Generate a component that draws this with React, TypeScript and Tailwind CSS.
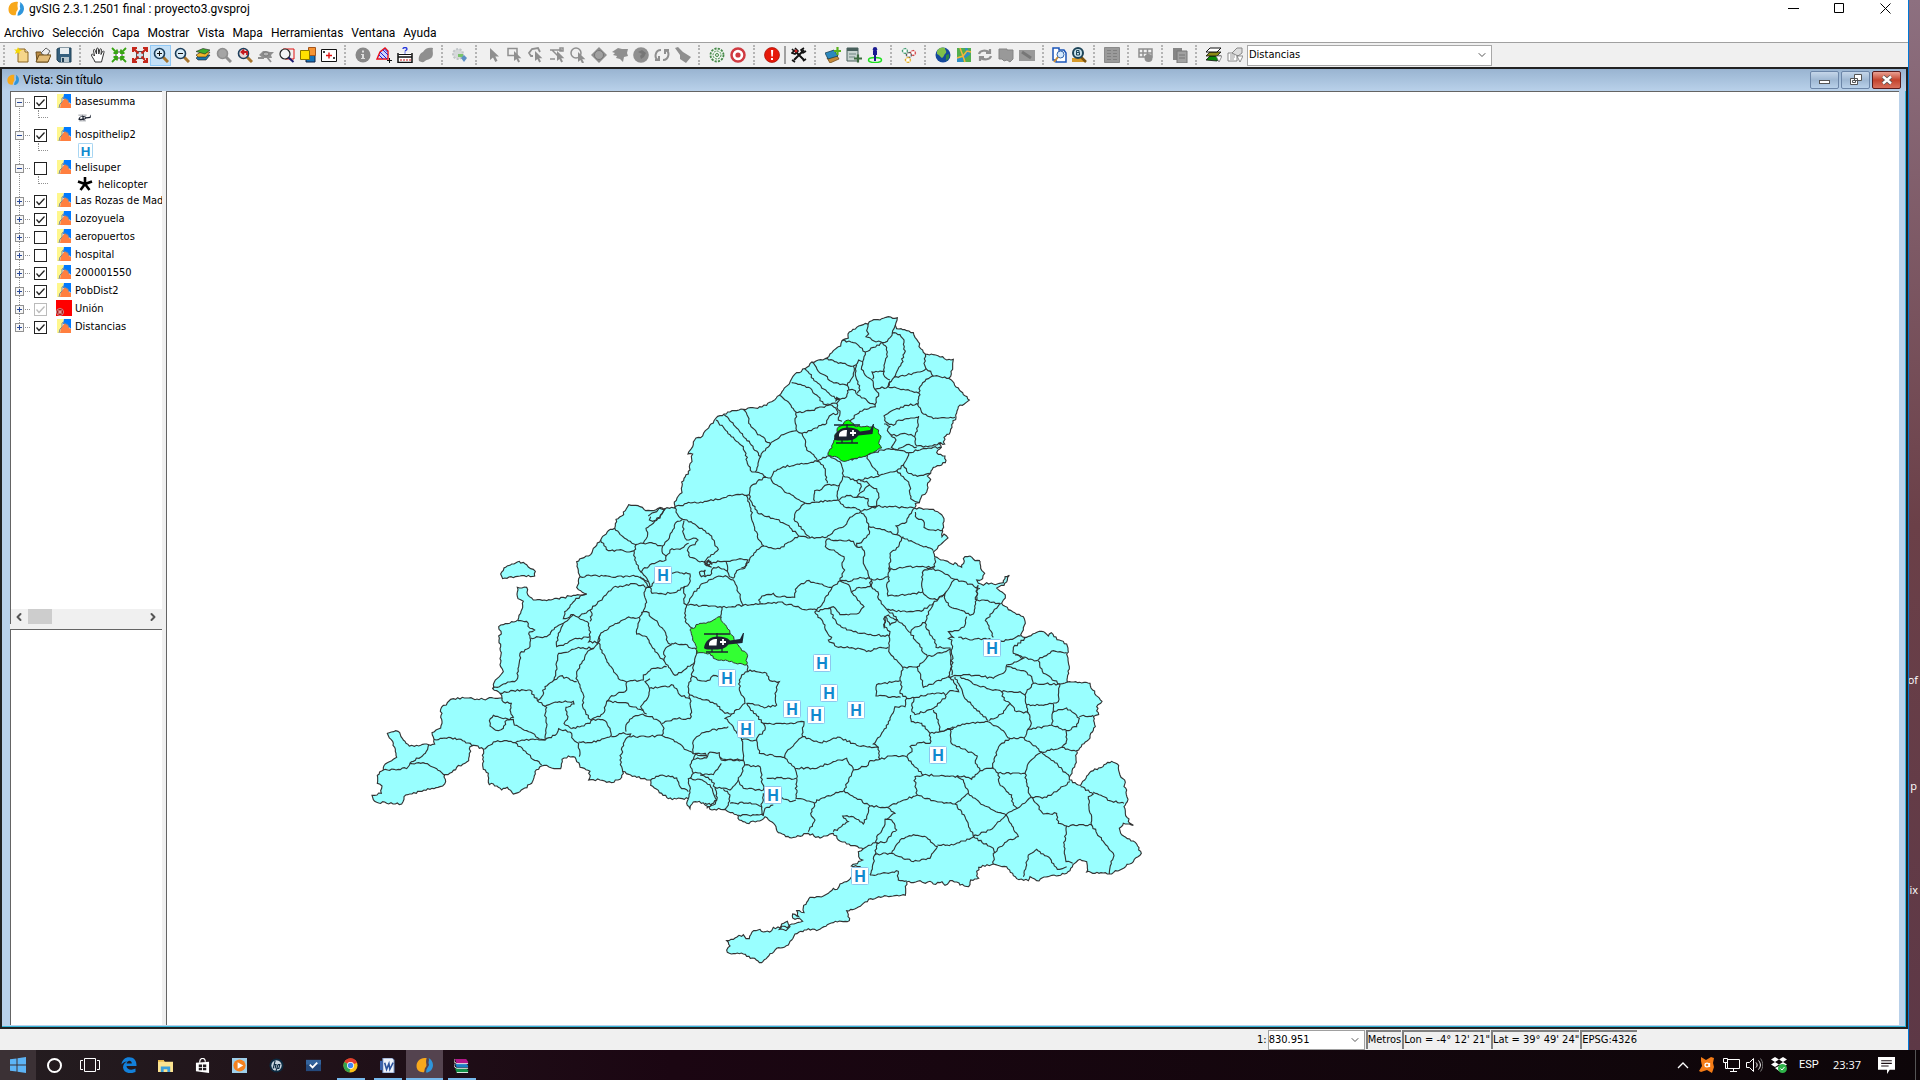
import type { ReactNode } from 'react';
import { ChevronDown, ChevronLeft, ChevronRight } from 'lucide-react';

const GRAY = '#8f8f8f';

// ---- Toolbar icons (16x16) ----

const magnifier = (lens: string, handle: string, extra?: ReactNode) => (
  <>
    <path d="M10 10l5 5" stroke={handle} strokeWidth="3" />
    <circle cx="6.5" cy="6.5" r="5" fill={lens} stroke={handle === GRAY ? GRAY : '#1d3f5c'} strokeWidth="1.6" />
    {extra}
  </>
);

const cursor = (x: number, y: number) => (
  <path d={`M${x} ${y}v10l2.4-2 1.8 3.6 1.8-1-1.8-3.4h3.2z`} fill={GRAY} />
);

const layerStack = (a: string, b: string, c: string) => (
  <>
    <path d="M1 11l4-3h10l-4 5H3z" fill={c} stroke="#222" strokeWidth=".6" />
    <path d="M1 8l5-3h9l-4 5H3z" fill={b} stroke="#222" strokeWidth=".6" />
    <path d="M1 4.5l7-3 7 1.5-5 4z" fill={a} stroke="#222" strokeWidth=".6" />
  </>
);

const icons: Record<string, ReactNode> = {
  Nuevo: (
    <>
      <path d="M4 2h7l3 3v10H4z" fill="#f6d68a" stroke="#8a6420" />
      <path d="M11 2v3h3" fill="#fff" stroke="#8a6420" />
      <path d="M4 0l1 2.6L8 3 5.500 4.500 6 7 4 5.500 1 7l1-3L0 2.500 3 2.600z" fill="#f5d800" />
    </>
  ),
  Abrir: (
    <>
      <path d="M1 5h5l1 1h6v9H2z" fill="#b98a43" stroke="#6b4c1b" />
      <path d="M6 6l5-5 4 3-4 6z" fill="#eee" stroke="#666" />
      <path d="M4 8h12l-3 7H1z" fill="#e2bc77" stroke="#6b4c1b" />
    </>
  ),
  Guardar: (
    <>
      <path d="M1 2l2-1h12v14H3l-2-2z" fill="#35607e" stroke="#234257" />
      <path d="M4 1h9v6H4z" fill="#e9eef1" />
      <path d="M5 10h8v5H5z" fill="#b8c7cf" />
      <path d="M6 11h2v4H6z" fill="#234257" />
    </>
  ),
  Desplazamiento: (
    <path
      d="M5 15C4 12 1.500 9.500 1.500 8s1.500-1 3 1L3.500 3.500c0-1.400 1.400-1.400 1.800 0L6.500 7 6.600 2c.1-1.300 1.600-1.300 1.800 0L8.800 7l1-4.500c.3-1.200 1.700-1 1.600.4L11 7.500l1.500-3c.6-1 1.900-.4 1.500.8L12.500 11l-1 4z"
      fill="#fff"
      stroke="#333"
    />
  ),
  'Zoom acercando': (
    <>
      <path d="M5 5h6v6H5z" fill="#fff" stroke="#444" />
      <path d="M1 1l5 5M6 2.500V6H2.500M15 1l-5 5M10 2.500V6h3.500M1 15l5-5M2.500 10H6v3.500M15 15l-5-5M13.500 10H10v3.500" fill="none" stroke="#37a412" strokeWidth="1.800" />
    </>
  ),
  'Zoom alejando': (
    <>
      <path d="M4.500 4.500h7v7h-7z" fill="#cfe3ee" stroke="#555" />
      <path d="M2 2l4.500 4.500M1 5V1h4M14 2L9.500 6.500M11 1h4v4M2 14l4.500-4.500M1 11v4h4M14 14L9.500 9.500M15 11v4h-4" fill="none" stroke="#c5281c" strokeWidth="2.200" />
    </>
  ),
  'Zoom más': magnifier('#d9ecf8', '#a8752c', <path d="M4 6.500h5M6.500 4v5" stroke="#111" />),
  'Zoom menos': magnifier('#d9ecf8', '#a8752c', <path d="M4 6.500h5" stroke="#111" />),
  'Zoom todo': layerStack('#3fae2b', '#f0b528', '#1b74a8'),
  'Zoom a la selección': magnifier('#a5a5a5', GRAY),
  'Zoom previo': magnifier('#e9d6d6', '#a8752c', <path d="M10 8V5H5m2-2.200L4.500 5 7 7.300" fill="none" stroke="#c4181e" strokeWidth="1.800" />),
  'Encuadres anteriores': (
    <>
      <path d="M1 8l4-4h3l4 1h4l-3 3 1 3H5z" fill={GRAY} />
      <path d="M0 11h6M9 10l4 5" stroke={GRAY} strokeWidth="1.800" />
      <ellipse cx="8" cy="7" rx="3" ry="2" fill="#b5b5b5" stroke="#777" />
    </>
  ),
  'Zoom a capa': (
    <>
      <path d="M4 2h11v10H6" fill="none" stroke="#e01010" />
      <circle cx="6" cy="7" r="5" fill="#f4f4f4" stroke="#222" strokeWidth="1.200" />
      <path d="M9.500 10.500l5 4.500" stroke="#1b1b70" strokeWidth="2" />
    </>
  ),
  'Gestión de encuadres': (
    <>
      <path d="M9 8h6v7H6v-5z" fill="#1673b8" stroke="#124" />
      <path d="M8.500.5h7v8h-7z" fill="#f79433" stroke="#a5541a" />
      <path d="M.5 3.500h9v9h-9z" fill="#ffe100" stroke="#8a7600" />
    </>
  ),
  'Centrar vista': (
    <>
      <path d="M.5 2.500h15v12H.5z" fill="#fff" stroke="#111" />
      <path d="M5 8.500h6M8 5.500v6" stroke="#e01010" strokeWidth="1.400" />
      <path d="M2 4l2 2m0-2L2 6M12 10l2 2m0-2l-2 2" stroke="#111" strokeWidth=".8" />
    </>
  ),
  Información: (
    <>
      <circle cx="8" cy="8" r="7.500" fill="#888" />
      <path d="M6 7h3v4h1v1H6v-1h1V8H6zM7 3.500h2v2H7z" fill="#ddd" />
    </>
  ),
  'Medir área': (
    <>
      <path d="M1 12L4 5l5-4 3 3v8z" fill="#cfd4ff" stroke="#e8101a" strokeWidth="1.400" />
      <path d="M4 5l7 7M7 3l5 5M3 8l4 4M8.500 2l3 3" stroke="#2323d0" />
      <path d="M11 13.500h5M13.500 11v5" stroke="#111" />
    </>
  ),
  'Medir distancia': (
    <>
      <path d="M1 6v9.500h14V6M1 10h14" fill="#fff" stroke="#111" strokeWidth="1.500" />
      <path d="M1.500 7.500h13" stroke="#111" />
      <path d="M4 12v2M7 12v2M10 12v2M13 12v2" stroke="#c11" />
      <path d="M6 2c0-2 4-2 4 0 0 1.200-2 1.200-2 2.500M8 5.500v1" fill="none" stroke="#2233dd" strokeWidth="1.300" />
    </>
  ),
  Hiperenlace: <path d="M1 14c-1-4 1-8 4-9 2-4 6-5 10-4-1 3 1 6-1 9-2 3-5 2-7 4-2 2-4 1-6 0z" fill={GRAY} />,
  Geoproceso: (
    <>
      <circle cx="6" cy="7" r="5" fill="#d5d8da" stroke="#c0c4c7" strokeWidth="2" strokeDasharray="2 1.500" />
      <path d="M6 7h5v3H6z" fill="#79c36a" />
      <path d="M12 8l3 3-3 4-3-4z" fill="#5d8fc4" />
    </>
  ),
  Seleccionar: <path d="M4 1v12l3-2.500L9.300 15l2.200-1.200L9.300 9.500H13z" fill={GRAY} />,
  'Selección por rectángulo': (<><path d="M1 1.500h9v7H1z" fill="none" stroke={GRAY} strokeWidth="1.500" />{cursor(7, 4)}</>),
  'Selección por polígono': (<><path d="M5 9H3L1 6l3-4 6-1 2 4" fill="none" stroke={GRAY} strokeWidth="1.800" />{cursor(7, 4)}</>),
  'Selección por polilínea': (<><path d="M1 3h12M3 3l8 8M1 12h5M11 1h3v3h-3z" fill="none" stroke={GRAY} strokeWidth="1.500" />{cursor(8, 4)}</>),
  'Selección por círculo': (<><circle cx="6" cy="6" r="5" fill="none" stroke={GRAY} strokeWidth="1.500" />{cursor(8, 5)}</>),
  'Selección por buffer': (<><path d="M8 0l8 8-8 8-8-8z" fill={GRAY} /><circle cx="8" cy="8" r="4.500" fill="#a0a0a0" stroke="#777" /></>),
  'Selección por capa': <path d="M0 5l6-4 4 1 6 0-1 4 1 3-4 1-1 5-3-3-4-1 1-2-4-1 2-2z" fill={GRAY} />,
  'Seleccionar todo': (<><circle cx="8" cy="8" r="7.800" fill={GRAY} /><path d="M5 5l4-2 4 3-2 4-3 2-1-3 2-2z" fill="#777" /></>),
  'Invertir selección': (
    <path d="M7 3c-6 0-7 8-3 10M1 13h4V9M9 13c6 0 7-8 3-10M15 3h-4v4" fill="none" stroke={GRAY} strokeWidth="2" />
  ),
  'Limpiar selección': <path d="M0 1l3-1 5 5 8 5-5 6-6-4V8z" fill={GRAY} />,
  Geoprocesos: (
    <>
      <circle cx="8" cy="8" r="6.500" fill="#eef5ee" stroke="#458a48" strokeWidth="1.800" strokeDasharray="2.200 1.200" />
      <circle cx="8" cy="8" r="4" fill="none" stroke="#458a48" strokeDasharray="2 1" />
      <circle cx="8" cy="8" r="1.500" fill="none" stroke="#458a48" />
    </>
  ),
  Modelador: (<><circle cx="8" cy="8" r="6.500" fill="#fff" stroke="#d03a41" strokeWidth="2.500" /><circle cx="8" cy="8" r="2.600" fill="#d03a41" /></>),
  Errores: (<><circle cx="8" cy="8" r="7.500" fill="#e61a0a" stroke="#a30d04" strokeWidth=".7" /><path d="M7 3h2.200l-.4 6.500H7.400zM7 11h2v2H7z" fill="#fff" /></>),
  Preferencias: (
    <>
      <path d="M3 3l10 10M13 3L3 13" stroke="#111" strokeWidth="2" />
      <path d="M1 2l2 2-2 2 3 1 3-3-3-3M15 4l-3 2-2-3 3-2M1 13l3 2M12 14l3-2" fill="none" stroke="#111" strokeWidth="1.600" />
      <circle cx="5" cy="4" r="1.500" fill="#c22" />
    </>
  ),
  'Añadir capa': (
    <>
      <path d="M2 11l9-4 3 5-9 4z" fill="#c58a3c" stroke="#6b4310" strokeWidth=".7" />
      <path d="M0 6l9-3 4 6-10 3z" fill="#2c88bd" stroke="#134" strokeWidth=".7" />
      <path d="M9 4h7M12.500 0v8" stroke="#59b31c" strokeWidth="2.200" />
    </>
  ),
  'Nueva capa': (
    <>
      <path d="M1 1h11v13H1z" fill="#c8d3cf" stroke="#48605c" />
      <path d="M1 1h11v3H1z" fill="#48605c" />
      <path d="M3 7h7M3 10h6" stroke="#6f8581" />
      <path d="M8 11.500h8M12 7.500v8" stroke="#3c6b3f" strokeWidth="2.200" />
    </>
  ),
  Localizar: (
    <>
      <ellipse cx="8" cy="13" rx="6.500" ry="2.500" fill="none" stroke="#1ee01e" strokeWidth="1.500" />
      <path d="M6 4h4v4H9v6H7V8H6z" fill="#1a1a90" />
      <circle cx="8" cy="2.200" r="2.200" fill="#1a1a90" />
    </>
  ),
  Topología: (
    <g fill="#fff" strokeWidth="1.2">
      <path d="M1 4l3-3 3 3-3 3z" stroke="#3c9b6e" strokeDasharray="1.500 .7" />
      <path d="M9 6l3-3 3 3-3 3z" stroke="#d23b3b" strokeDasharray="1.500 .7" />
      <path d="M5 8l3-3 3 3-3 3z" stroke="#555" strokeDasharray="1.500 .7" />
      <path d="M4 13l3-3 3 3-3 3z" stroke="#e5ad1f" strokeDasharray="1.500 .7" />
    </g>
  ),
  Globo: (<><circle cx="8" cy="8" r="7.500" fill="#14489c" /><path d="M2 4c2-4 6-4 8-3 0 2 2 3 1 5-2 1-2 4-4 5-2-1-2-3-5-4z" fill="#7fbf4a" /><path d="M11 8l3-1v4l-3 3z" fill="#2c8744" /></>),
  'Mapa web': (<><path d="M1 1h14v14H1z" fill="#2d8fc4" /><path d="M1 1h8l1 5-4 5-5-1zM11 1h4v7zM8 12l7-5v8H7z" fill="#52ae4d" /><path d="M1 11l6-2 4-5 4 1M4 1l3 8 2 6" fill="none" stroke="#f3b53d" strokeWidth="1.500" /></>),
  Actualizar: <path d="M2 7c1-4 7-4 10-2M13 2v4H9M14 9c-1 4-7 4-10 2M3 14v-4h4" fill="none" stroke={GRAY} strokeWidth="2.200" />,
  'Copiar escena': <path d="M1 2h8v1h6v9l-3 3-3-2-3 1-2-2H1z" fill="#999" stroke="#858585" />,
  Imagen: (<><path d="M0 3h16v11H0z" fill="#999" /><path d="M3 5l9 6" stroke="#777" strokeWidth="3" /></>),
  'Buscar documento': (
    <>
      <path d="M1 1h6v2h5l2 3v9H4v-2H1z" fill="#fff" stroke="#1a54b8" strokeWidth="1.500" />
      <circle cx="8.500" cy="7.500" r="3.500" fill="#d5eaff" stroke="#2f62a8" />
      <path d="M6 10l-4 5" stroke="#c68a35" strokeWidth="2" />
    </>
  ),
  Buscador: (
    <>
      <path d="M1 11h12v4H1z" fill="#d79a2a" />
      <path d="M10 10l5 5" stroke="#7d5410" strokeWidth="2.500" />
      <circle cx="7" cy="6" r="5" fill="#c7e0ea" stroke="#1d4458" strokeWidth="2" />
      <path d="M5.500 3.500h2.500v2H5.500zM5.500 5.500h3v2.500h-3z" fill="none" stroke="#1d4458" />
    </>
  ),
  Tabla: (<><path d="M.5.5h15v15H.5z" fill="#9a9a9a" stroke="#8a8a8a" /><path d="M3 3.500h4M3 6.500h4M3 9.500h4M3 12.500h4M9 3.500h4M9 6.500h4M9 9.500h4M9 12.500h4" stroke="#808080" /></>),
  'Unir tablas': (<><path d="M1 2h13v8H1zM1 6h13M5 2v8M9.500 2v8" fill="none" stroke={GRAY} strokeWidth="1.500" /><circle cx="10.500" cy="11" r="4" fill={GRAY} /></>),
  'Copiar tabla': (<><path d="M1 1h9v12H1z" fill="#858585" /><path d="M5 4h10v12H5z" fill="#a1a1a1" stroke="#777" /><path d="M7 8h6M7 11h6" stroke="#777" /></>),
  'Capa activa': (
    <>
      <path d="M0 13l4-4h11l-4 5z" fill="#0a8a0a" stroke="#111" strokeWidth=".8" />
      <path d="M0 9l4-4h11l-4 4z" fill="#8a8a14" stroke="#111" strokeWidth=".8" />
      <path d="M0 5l4-4h11l-4 4z" fill="#fff" stroke="#111" />
      <path d="M10 9h6l-3 6z" fill="#fff" stroke="#666" strokeWidth=".7" />
    </>
  ),
  'Herramienta activa': (
    <>
      <path d="M1 6h9v8H1z" fill="#fff" stroke="#888" />
      <path d="M3 8h5M3 10h5M3 12h4" stroke="#999" />
      <path d="M5 6l5-5h5v5l-4 3z" fill="#ddd" stroke="#888" />
      <path d="M10 9h6l-3 6z" fill="#fff" stroke="#666" strokeWidth=".7" />
    </>
  ),
};

const toolGroups: string[][] = [
  ['Nuevo', 'Abrir', 'Guardar'],
  ['Desplazamiento', 'Zoom acercando', 'Zoom alejando', 'Zoom más', 'Zoom menos', 'Zoom todo', 'Zoom a la selección', 'Zoom previo', 'Encuadres anteriores', 'Zoom a capa', 'Gestión de encuadres', 'Centrar vista'],
  ['Información', 'Medir área', 'Medir distancia', 'Hiperenlace'],
  ['Geoproceso'],
  ['Seleccionar', 'Selección por rectángulo', 'Selección por polígono', 'Selección por polilínea', 'Selección por círculo', 'Selección por buffer', 'Selección por capa', 'Seleccionar todo', 'Invertir selección', 'Limpiar selección'],
  ['Geoprocesos', 'Modelador'],
  ['Errores', '|', 'Preferencias'],
  ['Añadir capa', 'Nueva capa', 'Localizar'],
  ['Topología'],
  ['Globo', 'Mapa web', 'Actualizar', 'Copiar escena', 'Imagen'],
  ['Buscar documento', 'Buscador'],
  ['Tabla'],
  ['Unir tablas'],
  ['Copiar tabla'],
  ['Capa activa', 'Herramienta activa'],
];

function ToolButton({ name, narrow }: { name: string; narrow?: boolean }) {
  const active = name === 'Zoom más';
  return (
    <button
      aria-label={name}
      className={`flex h-[21px] shrink-0 items-center justify-center ${narrow ? 'w-[19px]' : 'w-[21px]'} ${
        active ? 'border border-[#90c8f6] bg-[#c4e0f7]' : ''
      }`}
    >
      <svg viewBox="0 0 16 16" className="size-4 shrink-0">
        {icons[name]}
      </svg>
    </button>
  );
}

function Toolbar() {
  return (
    <div className="flex h-[25px] items-center border-t border-[#a0a0a0] bg-[#f0f0f0]">
      {toolGroups.map((group) => (
        <div key={group[0]} className="flex items-center pr-[2px]">
          <span className="mr-[5px] ml-[3px] h-5 w-[3px] border-l-2 border-dotted border-[#b4b4b4]" />
          {group.map((name) =>
            name === '|' ? (
              <span key={name} className="mx-[2px] h-[18px] w-[2px] bg-[#a0a0a0]" />
            ) : (
              <ToolButton key={name} name={name} narrow={group[0] === 'Buscar documento'} />
            ),
          )}
        </div>
      ))}
      <div className="relative flex h-[21px] w-[245px] items-center">
        <select
          aria-label="Capa"
          className="h-full w-full appearance-none border border-[#a8a8a8] bg-white pl-px font-[DejaVu_Sans_Condensed,sans-serif] text-[11px] leading-4"
        >
          <option>Distancias</option>
        </select>
        <ChevronDown className="pointer-events-none absolute right-1 size-3 text-[#555]" />
      </div>
    </div>
  );
}

function GvLogo({ className }: { className: string }) {
  return (
    <svg viewBox="0 0 16 16" className={className}>
      <path d="M10 1C4 0 .5 4 .5 8.500c0 4 3 6.300 7 5.800 1-2 .2-3.300 1.700-4.800 1.800-1.800-.7-3.500.8-8.500z" fill="#f8a81b" />
      <path d="M11.800 1c1.200 2.200-.6 3.700.3 5.700.8 2-2.600 3.300-2.600 8C14 14.500 16 10.500 16 7.500 16 4.500 14 2 11.800 1z" fill="#2f96dc" />
    </svg>
  );
}

// ---- Table of contents ----

type Layer = {
  name: string;
  visible: boolean;
  disabled?: boolean;
  symbol?: 'heli' | 'hospital' | 'star';
  symbolLabel?: string;
};

const layers: Layer[] = [
  { name: 'basesumma', visible: true, symbol: 'heli' },
  { name: 'hospithelip2', visible: true, symbol: 'hospital' },
  { name: 'helisuper', visible: false, symbol: 'star', symbolLabel: 'helicopter' },
  { name: 'Las Rozas de Mad', visible: true },
  { name: 'Lozoyuela', visible: true },
  { name: 'aeropuertos', visible: false },
  { name: 'hospital', visible: false },
  { name: '200001550', visible: true },
  { name: 'PobDist2', visible: true },
  { name: 'Unión', visible: true, disabled: true },
  { name: 'Distancias', visible: true },
];

function LayerIcon({ broken }: { broken?: boolean }) {
  if (broken) {
    return (
      <svg viewBox="0 0 16 16" className="mr-[3px] -ml-px size-4 shrink-0">
        <path d="M0 0h16v16H0z" fill="#ff0000" />
        <circle cx="4" cy="12" r="3.500" fill="#a00" stroke="#c99" />
        <path d="M3 10v4M5 10v4M3 12h2" stroke="#fff" strokeWidth=".8" />
      </svg>
    );
  }
  return (
    <svg viewBox="0 0 14 14" className="mr-1 size-[14px] shrink-0">
      <path d="M0 0h7L3 14H0z" fill="#fff78c" />
      <path d="M7 0h7v10l-4-4-4-1z" fill="#007bff" />
      <path d="M3 14l1-5 3-4h3l2 4 2 1v4z" fill="#ff7f3f" />
      <path d="M2 14l1-4 2-2V4l2-1M7 4l4 2 1 3" fill="none" stroke="#7d8894" />
    </svg>
  );
}

function Tree() {
  return (
    <ul className="relative flex-1 overflow-hidden font-[DejaVu_Sans_Condensed,sans-serif] text-[11px]">
      {layers.map((layer, i) => (
        <li key={layer.name} className="relative">
          {i < layers.length - 1 && (
            <span className="absolute top-3 left-2 h-full border-l border-dotted border-[#909090]" />
          )}
          <div className="relative flex h-[18px] items-center">
            <button
              aria-label={`Desplegar ${layer.name}`}
              className="relative mt-[2px] ml-1 flex size-[9px] shrink-0 items-center justify-center border border-[#919191] bg-[#f6f6f6]"
            >
              <span className="absolute h-px w-[5px] bg-[#2a4a9a]" />
              {!layer.symbol && <span className="absolute h-[5px] w-px bg-[#2a4a9a]" />}
            </button>
            <span className="mt-[2px] mr-1 ml-px w-[5px] shrink-0 border-t border-dotted border-[#909090]" />
            <label className="flex items-center whitespace-nowrap">
              <span className={`relative mt-[2px] mr-[10px] size-[13px] shrink-0 ${layer.disabled ? 'opacity-30' : ''}`}>
                <input
                  type="checkbox"
                  defaultChecked={layer.visible}
                  disabled={layer.disabled}
                  className="peer block size-[13px] appearance-none border border-[#222] bg-white"
                />
                <svg viewBox="0 0 13 13" className="pointer-events-none absolute inset-0 hidden size-[13px] peer-checked:block">
                  <path d="M2.500 6.500l2.500 3 5.500-6" fill="none" stroke="#222" strokeWidth="1.300" />
                </svg>
              </span>
              <LayerIcon broken={layer.disabled} />
              <span className="pt-[2px] leading-4">{layer.name}</span>
            </label>
          </div>
          {layer.symbol && (
            <div className="flex h-[15px] items-center">
              <span className="mb-[7px] ml-[27px] h-2 w-[10px] shrink-0 border-b border-l border-dotted border-[#909090]" />
              <span className="mr-[5px] ml-[29px] flex w-4 shrink-0 justify-center">
                {layer.symbol === 'heli' && (
                  <svg viewBox="0 0 44 24" className="h-[8px] w-[14px]">
                    <Helicopter />
                  </svg>
                )}
                {layer.symbol === 'hospital' && (
                  <svg viewBox="0 0 18 18" className="size-[15px]">
                    <HospitalMark x={9} y={9} />
                  </svg>
                )}
                {layer.symbol === 'star' && (
                  <svg viewBox="0 0 16 16" className="size-4">
                    <path d="M8 8V1M8 8L1 5.500M8 8l7-2.500M8 8l-4.500 6M8 8l4.500 6" stroke="#000" strokeWidth="2.600" />
                  </svg>
                )}
              </span>
              <span className="pt-[2px] leading-4">{layer.symbolLabel}</span>
            </div>
          )}
        </li>
      ))}
    </ul>
  );
}

// ---- Map ----

function Helicopter() {
  return (
    <>
      <path d="M1 3h26M14 2v4M3 21h22M9 17v4M19 17v4" stroke="#1b2230" strokeWidth="1.300" />
      <path d="M1 17C2 10 7 5.500 15 5.500c5 0 9 1 12 4l10-1.500 3-6h1l-1.500 10-14 1.500c-3 4-7 5-13 5C6 18.500 2 19 1 17z" fill="#1b2230" />
      <path d="M6 13c0-3 3-5 8-5l-.5 6.500H6z" fill="#fff" />
      <path d="M17 11h6M20 8v6" stroke="#fff" strokeWidth="1.800" />
    </>
  );
}

function HospitalMark({ x, y }: { x: number; y: number }) {
  return (
    <>
      <rect x={x - 8.5} y={y - 8.5} width="17" height="17" rx="1" fill="#fff" stroke="#8cc8ee" />
      <text
        x={x}
        y={y + 6}
        textAnchor="middle"
        fill="#1089cf"
        className="font-[Liberation_Sans,sans-serif] text-[16px] font-bold"
      >
        H
      </text>
    </>
  );
}

// Breaks long segments into short uneven steps so borders look surveyed, not ruled.
function roughen(d: string) {
  const closed = d.endsWith('Z');
  const pts = d
    .replace(/[MZ]/g, '')
    .split(' ')
    .map((p) => p.split(',').map(Number));
  if (closed) pts.push(pts[0]);
  const out = [pts[0].join(',')];
  for (let i = 1; i < pts.length; i++) {
    const [x0, y0] = pts[i - 1];
    const [x1, y1] = pts[i];
    const length = Math.hypot(x1 - x0, y1 - y0);
    const steps = Math.max(1, Math.floor(length / 6));
    for (let s = 1; s < steps; s++) {
      const t = s / steps;
      const noise = Math.sin((x0 + y1) * 12.9 + s * 78.2) * 43758.5;
      const shift = (noise - Math.floor(noise) - 0.5) * 6;
      const x = x0 + (x1 - x0) * t - ((y1 - y0) / length) * shift;
      const y = y0 + (y1 - y0) * t + ((x1 - x0) / length) * shift;
      out.push(`${Math.round(x)},${Math.round(y)}`);
    }
    out.push(`${x1},${y1}`);
  }
  return `M${out.join(' ')}${closed ? 'Z' : ''}`;
}

// Every sheet is digitised at three units per pixel, from its own origin.
const sheets = [
  {
    origin: [640, 310],
    closing: ' 1020,850 0,850',
    outline:
      'M0,590 12,598 24,601 40,602 55,594 75,596 95,592 104,594 103,576 115,558 126,548 125,516 136,500 150,480 148,470 156,455 158,432 144,432 154,416 168,384 188,378 196,362 222,332 228,324 252,312 270,306 310,298 345,294 380,286 400,272 418,256 430,240 448,222 455,206 470,188 495,176 515,156 555,146 580,122 602,108 606,92 625,84 628,66 650,52 676,40 684,42 695,32 720,30 738,22 772,23 766,46 770,56 800,62 820,68 834,94 842,116 856,132 880,134 908,140 920,150 940,148 938,178 926,205 938,214 958,240 988,270 955,290 948,322 935,344 928,372 912,382 914,402 896,400 904,412 890,428 915,438 916,458 880,472 872,490 862,498 872,508 862,526 860,546 846,556 838,578 826,580 824,594 850,598 880,598 905,614 912,634 908,664 906,680 912,672 924,684 912,694 895,708 880,726 884,740 910,750 940,764 945,758 965,772 975,740 990,738 1005,752 1020,752',
    limits: [
      'M684,42 680,62 686,72 678,80 696,90 728,98 742,94 756,76 762,56 766,46',
      'M606,92 640,98 660,112 676,126 700,112 728,98 740,112 742,140 734,160 732,186',
      'M756,70 780,74 792,90 793,130 784,160 768,190 762,202',
      'M555,146 590,156 620,164 640,168 652,160 656,150 668,155 672,140 676,126',
      'M668,155 664,178 680,200 694,208 700,225 705,238 720,235 744,230 750,214',
      'M698,208 700,196 696,186 732,184 734,200 750,210',
      'M640,168 640,190 632,210 622,226 626,240 636,238 646,242 654,256 672,264 690,280 706,284',
      'M650,165 646,195 654,215 660,240 652,250',
      'M515,156 535,184 555,196 570,212 600,224 622,226',
      'M495,176 520,206 545,234 575,258 600,268',
      'M455,218 506,232 530,255 550,282 570,284 590,280 600,268 590,262 588,272 600,268 620,260 622,240',
      'M418,256 440,272 460,296 468,306 466,340 470,362',
      'M468,308 510,302 570,284',
      'M470,362 430,374 400,394 370,424 362,440 350,480 346,486',
      'M310,298 324,320 326,340 350,368 392,404',
      'M252,314 290,354 330,400 362,440',
      'M228,330 270,374 310,410 318,430 322,460 336,486 346,486 368,492 378,502 392,504',
      'M378,502 352,514 330,534 328,554',
      'M104,592 140,580 200,574 240,568 270,556 300,554 328,554',
      'M470,362 486,370 500,368 520,356 560,340 565,325 580,310 592,312 590,300 570,284',
      'M486,370 496,390 500,420 524,440 532,454',
      'M392,504 402,484 430,470 490,462 532,454 562,438',
      'M392,504 400,520 430,540 470,566 496,580',
      'M532,454 550,466 556,490 562,520',
      'M562,438 580,445 600,455 606,470 610,496 600,520 592,545 594,570',
      'M496,580 530,576 594,570 612,590 640,592 662,604',
      'M524,574 524,542 545,538 562,524 598,526',
      'M610,498 650,512 720,496 770,482 790,465 806,428',
      'M610,452 650,446 680,436 690,432 725,420 760,418 806,428',
      'M676,432 690,456 718,496',
      'M598,570 620,556 650,562 658,550 672,542 680,530 690,524',
      'M650,512 664,530 658,545',
      'M686,590 684,566 664,562 650,562',
      'M660,512 680,514 690,526 710,536 716,550 710,588',
      'M686,588 760,590 822,594',
      'M790,465 800,484 820,496 850,496 870,490',
      'M770,482 790,500 806,516 810,530 812,566 838,578',
      'M806,428 840,420 880,412 904,412',
      'M762,202 800,196 840,186 858,176 852,160 856,132',
      'M858,176 872,184 880,200',
      'M926,205 884,198 858,208 840,230 836,260 836,290 850,312 880,326 945,322',
      'M762,202 754,214 744,230 790,238 836,250',
      'M705,238 716,250 708,270 706,290 680,298 660,304 630,332',
      'M836,282 800,286 760,300 732,318 738,336 760,346 776,330 836,322',
      'M836,318 834,350 824,380 830,408 870,408 904,400',
      'M732,342 750,350 742,362 756,376 800,372 824,380',
      'M752,376 768,390 762,400 754,412 766,420 800,404 830,412',
      'M590,280 600,310 595,330 606,334',
      'M328,554 332,572 345,590 352,608 380,620 410,628 440,644 470,670 476,678',
      'M318,556 330,590 340,640 352,680 372,708 400,716 420,716 440,700 476,678 510,684 560,682',
      'M496,580 470,602 462,628 490,660 510,684',
      'M560,682 580,664 620,642 630,622 662,604',
      'M710,590 662,604 680,628 686,650 688,672 672,686 664,698 650,700 652,712',
      'M560,688 600,690 640,694 652,712',
      'M686,650 720,656 770,674 790,684 840,706 870,714 880,722',
      'M770,674 774,660 768,648 800,636 806,620 816,604 824,594',
      'M826,606 830,624 850,632 852,652 880,660 908,662',
      'M790,680 776,710 750,730 748,780 800,770 860,772 884,770 884,742',
      'M560,688 556,710 575,720 596,732 612,740 606,766 614,780 600,812 576,832',
      'M652,712 665,710 674,730 670,760 684,790 690,806',
      'M600,812 630,814 660,802 690,806 700,810 730,806 745,800 748,770',
      'M372,708 350,720 330,744 314,775 290,782 280,805',
      'M104,592 112,612 128,628 158,640 190,660 215,678 224,700 235,718 210,740 192,756',
      'M128,628 112,634 98,660 88,684 68,708 66,724 78,738 96,716 120,718 146,700',
      'M132,632 130,670 140,690 160,684 174,690 165,704 145,714 146,736 180,756 192,756 206,750 215,760 240,755 258,754 300,746 324,750 320,766 304,774',
      'M68,708 40,700 10,700 22,680 18,655 40,640 60,624 70,604 76,596',
      'M25,618 50,605 60,592 72,600 62,616 48,630 38,634 28,630 32,620',
      'M192,756 204,768 215,772 200,760 212,754 206,766 194,762 204,752 216,764',
      'M178,786 196,780 196,800 210,796 216,778 235,770 262,784 258,754',
      'M196,800 184,800 178,786',
      'M262,784 268,800 280,805',
      'M140,885 160,850 190,820 230,800 262,800 280,810 292,834 300,860 310,886',
      'M0,786 30,764 60,752 78,750 78,738',
      'M78,786 150,792 148,820 134,830 132,880 140,885',
      'M134,828 110,846 70,852 36,850 30,832 20,820 0,800',
      'M22,832 12,848 18,870 14,895 4,910 20,905 45,930 70,958',
      'M30,832 44,810',
      'M140,885 200,886 246,892 310,886 360,882 420,876 460,888 500,900 530,900 548,880 576,832',
      'M360,882 356,870 366,858 400,850 410,860 464,862 466,838 500,812 540,822 576,832',
      'M140,885 134,910 140,940 160,956',
      'M246,892 244,925',
      'M600,812 626,824 634,846 650,864 672,890 650,912 600,914 580,890 560,896 524,906',
      'M634,846 650,834 690,830 694,806 694,830 714,846 716,868 730,886 740,898',
      'M748,800 740,830 744,858 800,854 848,846',
      'M884,770 850,782 845,820 848,846 870,866 890,870 915,850 940,812 945,808',
      'M860,776 900,782 945,808 990,822 1020,836',
      'M740,898 800,906 850,900 880,880 915,850 916,870 930,890 960,900 990,916 1000,912 1004,888 1010,870 1014,828',
      'M740,898 768,920 770,930 750,945 735,920 732,955',
    ],
  },
  {
    origin: [360, 480],
    closing: '',
    outline:
      'M840,80 806,74 796,92 785,108 768,118 764,145 745,152 722,180 700,205 692,224 665,235 650,245 654,266 660,290 650,322 662,332 680,342 640,346 610,352 560,362 520,360 508,350 500,322 472,322 474,356 490,364 482,400 474,420 430,434 416,440 424,462 416,468 422,500 422,560 430,575 418,590 406,600 398,626 420,640 426,654 400,654 370,658 320,654 280,656 262,668 242,688 246,730 242,744 216,758 222,778 224,792 206,794 170,796 148,798 130,780 114,754 82,760 98,784 110,832 100,838 76,852 70,870 52,886 52,910 66,918 64,940 36,946 44,964 80,970 125,972 132,950 180,934 240,920 254,912 254,884 264,884 290,862 326,842 332,814 330,800 342,796 370,808 370,868 385,880 388,914 400,912 425,930 442,922 460,942 474,938 515,910 525,875 545,858 560,856 575,864 602,866 606,838 625,828 645,832 660,862 690,874 686,900 720,900 755,908 785,892 788,874 830,892 872,900 872,916 905,940 925,956 985,956 980,970 990,986 1000,966 1030,968',
    limits: [
      'M422,282 432,264 450,256 478,244 500,254 512,266 526,274 524,288 480,288 466,290 428,296Z',
      'M764,145 800,178 828,194 850,190',
      'M722,180 745,212 775,210 800,216 822,212 824,240 838,270 866,306',
      'M828,194 822,212',
      'M660,290 700,286 760,292 820,286 850,296 866,306 870,322',
      'M680,342 665,345 640,366 614,395 610,416 640,404 655,412 690,390 720,362 760,322 800,314 830,312 862,322 870,322',
      'M690,424 696,400 690,390',
      'M910,448 925,490 934,494 914,510 912,542 945,586 980,565 1004,545 1010,510',
      'M846,395 838,412 800,414 760,436 720,465 714,480 720,500 740,540 760,570 775,596 800,606 800,630 750,652 740,664',
      'M838,412 830,462 860,470 885,515 912,542',
      'M934,490 970,494 1010,508',
      'M640,404 610,430 595,460 590,500 610,496 640,478 690,470 686,430 670,420 655,412',
      'M512,474 560,470 590,440 610,430',
      'M474,422 500,424 510,445 524,450 508,456 512,480 510,500 480,520 476,560 470,600 430,612 398,626',
      'M690,470 686,486 716,486 700,506 680,520 665,550 650,575 648,595 660,615 672,650 668,680 690,718',
      'M716,486 720,465',
      'M700,504 650,505 625,516 596,520 590,560 582,600 600,588 650,605',
      'M582,600 555,620 545,650 532,662',
      'M420,640 460,632 510,630 532,662 560,682 556,700 560,740 556,778',
      'M554,680 580,668 640,664 642,672 618,682 624,710 612,730 634,746',
      'M426,654 430,666 454,670 450,690 460,712 440,720 430,745 415,752 390,738 388,722 400,706 430,716 460,718 463,735 500,752 545,778 556,780 590,762 596,746 630,756 640,778 656,790 658,830',
      'M634,746 690,730 700,718 735,722 750,745 754,766 720,782 690,788 656,786',
      'M690,720 720,710 735,690 740,664 790,668 840,688 850,692 860,702',
      'M754,770 790,758 812,762 790,790 780,840 788,874',
      'M808,770 870,770 905,766 912,745 900,725 870,710 848,702 820,710 798,735 798,755',
      'M850,690 842,680 865,650 868,625 855,605 870,596',
      'M868,625 940,616 960,645 990,656 994,690 990,716 945,716 905,730',
      'M800,606 850,600 850,585 880,565 920,560',
      'M905,766 950,786 980,810 1000,822',
      'M1004,545 996,590 984,620 990,656',
      'M996,588 1020,602',
      'M990,645 1020,656',
      'M222,778 285,774 342,796',
      'M370,808 400,786 440,782 466,788 500,820 545,855',
      'M466,788 500,778 556,780',
      'M206,794 196,820 150,850',
      'M70,870 140,866 150,850 195,850 230,866 254,886',
      'M872,900 900,886 950,894 960,920 985,935',
      'M985,956 990,920 985,896 1020,898 1050,914 1060,940 1070,960 1060,975 1035,970',
      'M1000,822 998,790 1010,770 1020,766',
      'M1000,822 1040,828 1036,820 1010,820 1000,838 990,855 1000,880 1035,882 1060,884 1084,850',
      'M1000,838 1040,834 1050,816 1078,818 1084,840 1150,842',
      'M990,895 1000,880',
    ],
  },
  {
    origin: [700, 560],
    closing: '',
    outline:
      'M840,3 842,25 854,40 848,56 830,60 835,70 850,76 860,68 880,72 910,68 915,50 928,46 922,60 912,76 890,84 916,105 910,120 905,130 938,155 970,170 976,190 970,210 962,225 980,232 1005,220 1025,214 1045,228 1054,218 1062,230 1100,252 1104,300 1108,320 1102,366 1170,370 1178,390 1206,424 1190,440 1196,464 1180,470 1186,500 1172,520 1170,534 1130,572 1128,600 1116,640 1108,660 1142,676 1160,648 1180,632 1235,604 1256,616 1260,645 1274,660 1272,680 1280,690 1282,725 1272,740 1276,760 1290,790 1300,796 1270,790 1258,805 1262,820 1310,852 1324,880 1300,905 1260,930 1228,942 1160,936 1160,905 1140,898 1124,910 1100,940 1050,948 1010,962 990,950 985,962 950,956 920,920 880,912 836,922 830,948 836,955 812,960 806,980 780,975 770,966 750,962 735,976 726,965 700,972 690,964 676,970 660,962 640,968 620,966 616,1006 560,1008 512,1016 490,1030 470,1044 440,1052 448,1082 400,1088 350,1112 325,1106 285,1122 275,1140 265,1155 225,1170 185,1208 130,1182 88,1180 80,1170 90,1158 80,1142 130,1124 138,1136 148,1136 156,1116 180,1108 190,1116 215,1112 220,1102 240,1104 245,1092 262,1084 270,1100 258,1112 238,1108 246,1098 262,1104 275,1092 308,1084 300,1076 278,1074 278,1062 296,1070 290,1052 312,1058 310,1042 330,1012 370,1008 385,1000 400,985 412,988 420,972 440,965 455,950 480,920 454,918 488,900 476,890 475,875 490,866 440,852 415,840 400,820 360,834 325,820 275,834 235,818 225,795 195,770 185,780 140,790 118,780 115,768 85,755 75,748 30,748 10,728',
    limits: [
      'M344,156 375,195 380,215 395,232 385,240 410,260 480,266 500,275 540,262 565,262',
      'M386,142 410,190 440,210 480,220 568,228',
      'M555,170 552,200 570,215 566,250 570,280 590,300 608,322 652,322',
      'M555,170 565,165 580,175 610,195 632,218 660,260 682,290',
      'M632,218 640,205 675,188 690,150 700,130',
      'M675,188 690,225 705,240 708,262 750,264 752,300 756,320 745,350 670,382 662,350 652,320 682,290 750,268',
      'M608,322 600,360 606,380 600,400 620,415 615,440 585,440 570,480 540,530 520,552 535,562 540,598',
      'M600,362 530,374 528,408 602,412',
      'M620,415 650,412 690,402 730,398 738,410 700,445 645,464 636,455 640,412',
      'M632,465 634,485 665,490 690,520 690,550 665,548 630,560 636,575 620,590',
      'M700,450 715,480 720,515 760,500',
      'M690,520 750,508 800,490 865,485',
      'M750,508 754,550 800,572 832,588 826,610 840,632',
      'M738,405 750,392 776,395 760,360 745,350',
      'M765,350 800,420 865,482',
      'M745,350 790,344 850,350 880,355 915,335 920,315 960,300 970,295 940,280 940,262 980,232',
      'M800,170 795,195 775,212 745,215 760,232 745,236 756,240 756,345',
      'M775,232 810,240 850,236 905,244 962,228',
      'M905,130 880,155 856,182 870,210 880,232',
      'M835,75 826,118 900,130',
      'M945,285 1010,302 1060,272 1100,278',
      'M1014,302 1030,340 1080,372 1102,366',
      'M920,320 970,332 995,350 1000,370 1080,372',
      'M780,350 830,375 905,395 960,395 975,405 980,435',
      'M1000,370 980,395 975,405',
      'M1080,372 1075,425 1030,436 980,435 985,460 994,490 980,520 972,534',
      'M905,395 912,420 930,430 910,460 868,482',
      'M930,430 950,455 985,458',
      'M865,485 900,505 930,535 972,534 1024,576 1065,608 1108,650',
      'M982,510 1055,495 1100,512 1130,500 1138,475 1100,444 1058,458 1055,495',
      'M1058,458 1060,432',
      'M1138,470 1180,466',
      'M1098,512 1098,550 1085,562 1024,576 985,610 975,640 985,690 994,712',
      'M1085,562 1128,574',
      'M930,536 900,555 885,590 878,625 895,640 975,640',
      'M840,632 880,622',
      'M895,640 898,670 935,705 940,735 952,745 994,712',
      'M620,590 640,615 670,645 760,648 805,652 815,658 840,632',
      'M670,645 645,650 645,680 652,705 600,725 560,742 510,738',
      'M770,648 790,660 805,700 765,732 700,722 652,705',
      'M805,700 850,735 918,765 952,745',
      'M765,732 795,770 820,830 870,810 918,765 955,830 920,845 880,880 880,912',
      'M820,830 880,865 885,880',
      'M994,712 1040,712 1075,690 1110,665',
      'M994,712 1030,762 1070,760 1075,790 1100,798 1175,795 1165,710 1180,702 1142,680',
      'M1180,696 1235,724 1272,730',
      'M1175,795 1205,840 1240,880 1228,942',
      'M1100,798 1092,860 1098,905 1118,910',
      'M970,950 985,885 1010,868 1050,895 1072,928 1100,920',
      'M560,742 585,760 555,778 552,800 530,830 526,848 500,860 490,866',
      'M555,778 575,780 590,810 575,820 560,845 530,848 525,884 510,945',
      'M525,884 575,880 640,905 690,895 712,860 680,832 640,824 600,840 575,880',
      'M712,855 760,855 820,832',
      'M510,945 595,934 595,960 620,962',
      'M510,738 500,770 490,792 460,770 428,768 445,785 400,815',
      'M325,815 345,780 332,760 350,720 432,692 510,738',
      'M432,692 460,630 440,595 400,605 350,625 285,625 255,595 260,575 308,530 360,548 420,532 470,556 535,562',
      'M460,630 505,615 510,602 540,598 570,588 620,590',
      'M308,530 312,485 260,492 190,490 150,445 140,430',
      'M190,490 195,510 170,535 178,580 255,592',
      'M285,625 290,655 288,715 345,730',
      'M288,655 200,655',
      'M288,720 270,725 245,712',
      'M140,430 200,442 230,435 225,400 238,365 210,362 200,340 150,330 125,345 118,360 118,390 130,410 135,430 95,462 75,475 90,490 125,540 170,540',
      'M0,415 50,432 70,455 95,462',
      'M0,362 30,360 40,346 56,350',
      'M142,315 142,335',
      'M85,500 20,515 0,525',
      'M125,540 130,600 134,615 115,660 130,685 190,690 180,620 134,615',
      'M130,600 75,598 60,592',
      'M0,645 35,660 45,682 90,690 115,660',
      'M45,682 50,720 20,745',
      'M70,688 90,705 85,735 75,748',
      'M90,730 150,728 185,740 190,700',
      'M115,765 190,766 195,745 220,735',
      'M185,740 190,766',
    ],
  },
];

const hospitals = [
  [663, 575], [727, 678], [746, 729], [822, 663], [829, 693], [792, 709], [816, 715],
  [856, 710], [992, 648], [938, 755], [773, 795], [860, 876],
];

function MapView() {
  return (
    <svg className="block h-full w-full" role="img" aria-label="Mapa de municipios">
      <g transform="translate(-167 -92)">
        <path d="M640 560L975 580 703 804z" fill="#99ffff" />
        {sheets.map(({ origin, outline, closing }) => (
          <path
            key={origin[0]}
            d={roughen(outline) + closing}
            fill="#99ffff"
            transform={`translate(${origin[0]} ${origin[1]}) scale(.33333)`}
          />
        ))}
        {sheets.map(({ origin, outline, limits }) => (
          <g
            key={origin[0]}
            transform={`translate(${origin[0]} ${origin[1]}) scale(.33333)`}
            fill="none"
            stroke="#333"
            strokeWidth="3.4"
          >
            <path d={roughen(outline)} />
            {limits.map((d) => (
              <path key={d} d={roughen(d)} fill={d.endsWith('Z') ? '#99ffff' : 'none'} />
            ))}
          </g>
        ))}
        <g stroke="#333" strokeWidth="3">
          <path
            transform="translate(640 310) scale(.33333)"
            fill="#00ff00"
            d={roughen('M564,436 582,390 596,350 625,330 650,350 700,348 716,360 722,385 716,400 725,414 690,430 670,440 610,454 596,444Z')}
          />
          <path
            transform="translate(360 480) scale(.33333)"
            fill="#33ff33"
            d={roughen('M990,450 1020,430 1050,426 1080,410 1100,440 1115,465 1130,490 1145,512 1160,520 1160,555 1120,548 1060,535 1050,520 1010,520 1005,490Z')}
          />
        </g>
        <g transform="translate(833 422)">
          <Helicopter />
        </g>
        <g transform="translate(703 631)">
          <Helicopter />
        </g>
        {hospitals.map(([x, y]) => (
          <HospitalMark key={`${x}-${y}`} x={x} y={y} />
        ))}
      </g>
    </svg>
  );
}

// ---- Taskbar ----

const taskIcons: { name: string; art: ReactNode; open?: boolean; active?: boolean }[] = [
  { name: 'Explorador', art: (<><path d="M0 2h6l1 2h9v11H0z" fill="#fce38f" /><path d="M0 2h6l1 2H0z" fill="#e8b84a" /><path d="M3 15V9h10v6h-3v-3H6v3z" fill="#3ba0dc" /></>) },
  { name: 'Tienda', art: (<><path d="M1 5l14-1v12L1 14z" fill="#fff" /><path d="M5 5c0-6 6-6 6-1" fill="none" stroke="#fff" strokeWidth="1.300" /><path d="M4 7h3.500v2.500H4zM8.500 7H12v2.500H8.500zM4 10.500h3.500V13H4zM8.500 10.500H12V13H8.500z" fill="#221c20" /></>) },
  { name: 'Reproductor', art: (<><path d="M0 0h16v16H0z" fill="#9fd0ec" /><circle cx="8" cy="8" r="6.500" fill="#f58220" /><path d="M6 4.500l6 3.500-6 3.500z" fill="#fff" /></>) },
  { name: 'HP', art: (<><circle cx="8" cy="8" r="7.500" fill="#0c2a40" /><circle cx="8" cy="8" r="5.500" fill="#c9d6df" /><path d="M6.500 3L4.500 11M5.500 7h2l-1 4M9.500 7l-2 7M9.500 7h2l-1 4H9" fill="none" stroke="#0c2a40" strokeWidth="1.200" /></>) },
  { name: 'Tareas', art: (<><path d="M0 2h16v12H0z" fill="#24497c" /><path d="M0 2h16v5H0z" fill="#34649d" /><path d="M4 7l3 3 5-5" fill="none" stroke="#fff" strokeWidth="2" /></>) },
  { name: 'Chrome', open: true, art: (<><circle cx="8" cy="8" r="7.500" fill="#fbc116" /><path d="M8 8L1.500 4.200A7.500 7.500 0 0 1 15 5z" fill="#e33b2e" /><path d="M8 8l-1 7.400A7.500 7.500 0 0 1 1.500 4.200z" fill="#31a350" /><circle cx="8" cy="8" r="3.700" fill="#fff" /><circle cx="8" cy="8" r="2.900" fill="#4286f5" /></>) },
  { name: 'Word', open: true, art: (<><path d="M3 0h10l2 2v14H3z" fill="#eef3fb" stroke="#6885bb" /><path d="M0 3h3v10H0z" fill="#3b62ab" /><path d="M5 5l2 7 2.500-6 1 6L14 5" fill="none" stroke="#2c529c" strokeWidth="1.700" /></>) },
  { name: 'gvSIG', open: true, active: true, art: null },
  { name: 'WinRAR', open: true, art: (<><path d="M1 1h12l2 3v2H3z" fill="#b21789" /><path d="M1 6h12l2 2v2H3z" fill="#1b7fc4" /><path d="M1 11h12l2 2v3H3z" fill="#139047" /><path d="M0 1v3l3 2h12M0 6v3l3 2h12M3 15.500h12" fill="none" stroke="#eee" /></>) },
];

function Taskbar() {
  return (
    <footer className="flex h-[30px] shrink-0 items-stretch bg-gradient-to-r from-[#241d20] via-[#1b0612] via-35% to-[#0d0609] font-[Open_Sans,sans-serif] text-[12px] text-white">
      <button aria-label="Inicio" className="flex w-9 items-center justify-center bg-[#3b3135]">
        <svg viewBox="0 0 16 16" className="size-4">
          <path d="M0 2.300L6.500 1.400v6.100H0zM7.500 1.200L16 0v7.500H7.500zM0 8.500h6.500v6.100L0 13.700zM7.500 8.500H16V16l-8.500-1.200z" fill="#5db4f5" />
        </svg>
      </button>
      <button aria-label="Cortana" className="flex w-9 items-center justify-center">
        <span className="size-[15px] rounded-full border-2 border-white" />
      </button>
      <button aria-label="Vista de tareas" className="flex w-9 items-center justify-center">
        <svg viewBox="0 0 20 14" className="h-[14px] w-5" fill="none" stroke="#fff">
          <path d="M4.500.5h11v13h-11zM3 2.500H.5v9H3M17 2.500h2.500v9H17" />
        </svg>
      </button>
      <button aria-label="Edge" className="ml-[2px] flex w-[37px] items-center justify-center">
        <svg viewBox="0 0 16 16" className="size-4">
          <path d="M.5 7.500C1 3 4 .3 8.200.3c5 0 7.500 3.500 7.300 8.700H5.500c.3 4 5.500 4.500 9 2.500V15C9 17.500 2.500 16 2 10.500c0-3 1.800-5 4-6C3.500 4.700 1.500 6 .5 7.500zM5.600 6.500h5.200c0-3.600-4.700-3.400-5.200 0z" fill="#1380da" fillRule="evenodd" />
        </svg>
      </button>
      {taskIcons.map((t) => (
        <button
          key={t.name}
          aria-label={t.name}
          className={`relative flex w-[37px] items-center justify-center ${t.active ? 'bg-[#54434f]' : ''}`}
        >
          {t.art ? <svg viewBox="0 0 16 16" className="size-[15px]">{t.art}</svg> : <GvLogo className="size-[17px]" />}
          {t.open && <span className={`absolute bottom-0 h-[2px] bg-[#76b9ed] ${t.active ? 'w-full' : 'w-7'}`} />}
        </button>
      ))}
      <div className="mr-1 ml-auto flex items-center border-r border-[#555]">
        <svg viewBox="0 0 12 8" className="mr-[10px] h-2 w-3" fill="none" stroke="#fff" strokeWidth="1.300">
          <path d="M1 7l5-5 5 5" />
        </svg>
        <svg viewBox="0 0 16 16" className="mr-2 size-4">
          <path d="M2 0l5 3 5-3 3 1-1 5 1 4-2 6-5-3-6 2-2-1 3-5-1-5z" fill="#f47b16" />
          <path d="M10.500 6v4M6 8c0-2.500 4-2.500 4 0s-4 2.500-4 0z" fill="none" stroke="#fff" strokeWidth="1.300" />
        </svg>
        <svg viewBox="0 0 17 16" className="mr-[6px] h-4 w-[17px]" fill="none" stroke="#fff">
          <path d="M4.500 2.500h12v9h-12zM10.500 11.500v3M7 14.500h7M.5 1.500h4v4h-4zM2.500 5.500v6h2" />
        </svg>
        <svg viewBox="0 0 17 16" className="mr-2 h-4 w-[17px]" fill="none" stroke="#fff">
          <path d="M.5 5.500h3l4-4v13l-4-4h-3zM10 5.500c1.500 1.500 1.500 3.500 0 5M12.500 3.500c2.500 3 2.500 6 0 9" />
          <path d="M14.500 1.500c3 4 3 9 0 13" stroke="#777" />
        </svg>
        <svg viewBox="0 0 16 16" className="mr-3 size-4">
          <path d="M4 0l4 2.500L4 5 0 2.500zM12 0l4 2.500L12 5 8 2.500zM4 5l4 2.500L4 10 0 7.500zM12 5l4 2.500L12 10 8 7.500zM4 11l4-2 4 2-4 3z" fill="#fff" />
          <circle cx="11.500" cy="11.500" r="4.500" fill="#2fb34a" />
          <path d="M9.500 11.500l1.500 1.500 2.500-3" fill="none" stroke="#fff" />
        </svg>
        <span className="mr-[14px] w-5 font-[Roboto,sans-serif] text-[11px]">ESP</span>
        <span className="mr-4 w-[29px] text-[11px]">23:37</span>
        <button aria-label="Centro de actividades" className="mr-5">
          <svg viewBox="0 0 16 16" className="size-[17px]">
            <path d="M0 0h16v12h-5l-2.500 4v-4H0z" fill="#fff" />
            <path d="M3 3.500h10M3 6h10M3 8.500h7" stroke="#1b0f14" />
          </svg>
        </button>
      </div>
    </footer>
  );
}

const menus = ['Archivo', 'Selección', 'Capa', 'Mostrar', 'Vista', 'Mapa', 'Herramientas', 'Ventana', 'Ayuda'];
const statusCells = ['Metros', 'Lon = -4° 12\' 21"', 'Lat = 39° 49\' 24"', 'EPSG:4326'];

export default function App() {
  return (
    <div className="flex h-screen flex-col overflow-hidden text-black">
      <div className="flex min-h-0 flex-1">
        <div className="flex min-w-0 flex-1 flex-col border-r border-[#0078d7] bg-white">
          <header className="flex h-[17px] items-center font-[Roboto,sans-serif] text-[12px]">
            <GvLogo className="mr-[5px] ml-2 size-4" />
            <h1 className="leading-4">gvSIG 2.3.1.2501 final : proyecto3.gvsproj</h1>
            <div className="ml-auto flex gap-[35px] pr-[17px]">
              <button aria-label="Minimizar">
                <svg viewBox="0 0 11 11" className="size-[11px]"><path d="M0 5.500h11" stroke="#000" /></svg>
              </button>
              <button aria-label="Maximizar">
                <svg viewBox="0 0 11 11" className="size-[11px]"><path d="M.5.5h9v9h-9z" fill="none" stroke="#000" /></svg>
              </button>
              <button aria-label="Cerrar">
                <svg viewBox="0 0 11 11" className="size-[11px]"><path d="M.5.5l10 10m0-10l-10 10" stroke="#000" /></svg>
              </button>
            </div>
          </header>
          <nav className="flex h-[25px] items-center gap-2 pb-px pl-1 font-[Roboto,sans-serif] text-[12px]">
            {menus.map((m) => (
              <button key={m} className="mt-[7px]">{m}</button>
            ))}
          </nav>
          <Toolbar />

          <section className="flex min-h-0 flex-1 flex-col border-2 border-[#222] bg-[#b9d1ea]">
            <header className="flex h-[22px] shrink-0 items-center bg-gradient-to-b from-[#99b4d1] to-[#b9d1ea] font-[Roboto,sans-serif] text-[12px]">
              <GvLogo className="mr-1 ml-[5px] size-3" />
              <h2>Vista: Sin título</h2>
              <div className="mr-[5px] ml-auto flex gap-[2px]">
                <button aria-label="Minimizar vista" className="flex h-[18px] w-[29px] items-center justify-center rounded-xs border border-[#6c86a8] bg-gradient-to-b from-[#c5d6e9] via-[#9fb8d3] to-[#b9d1ea]">
                  <span className="mt-[3px] h-1 w-[11px] border border-[#555] bg-white" />
                </button>
                <button aria-label="Restaurar vista" className="flex h-[18px] w-[29px] items-center justify-center rounded-xs border border-[#6c86a8] bg-gradient-to-b from-[#c5d6e9] via-[#9fb8d3] to-[#b9d1ea]">
                  <svg viewBox="0 0 12 12" className="size-3" fill="#fff" stroke="#555">
                    <path d="M4.500.5h7v6h-7zM.5 4.500h7v6h-7zM2.500 6.500h3v2h-3z" />
                  </svg>
                </button>
                <button aria-label="Cerrar vista" className="flex h-[18px] w-[29px] items-center justify-center rounded-xs border border-[#5a1a1a] bg-gradient-to-b from-[#e9a093] via-[#c3422c] to-[#d9705c]">
                  <svg viewBox="0 0 12 10" className="h-[10px] w-3">
                    <path d="M2 1.500l8 7m0-7l-8 7" stroke="#555" strokeWidth="4" />
                    <path d="M2 1.500l8 7m0-7l-8 7" stroke="#fff" strokeWidth="2.400" />
                  </svg>
                </button>
              </div>
            </header>
            <div className="flex min-h-0 flex-1 border-r border-b border-[#35b5d8] pr-[6px] pb-px pl-2">
              <aside className="flex w-[152px] shrink-0 flex-col bg-[#f0f0f0]">
                <div className="flex h-[533px] shrink-0 flex-col border-t border-l border-[#646464] bg-white">
                  <Tree />
                  <div className="flex h-[15px] items-center bg-[#f0f0f0] text-[#555]">
                    <ChevronLeft className="ml-[2px] size-3" strokeWidth={4} />
                    <span className="ml-[3px] h-[15px] w-6 bg-[#cdcdcd]" />
                    <ChevronRight className="mr-[3px] ml-auto size-3" strokeWidth={4} />
                  </div>
                </div>
                <div className="mt-[5px] flex-1 border-t border-l border-[#646464] bg-white" />
              </aside>
              <div className="w-1 bg-[#f0f0f0]" />
              <main className="min-w-0 flex-1 overflow-hidden border-t border-l border-[#646464] bg-white">
                <MapView />
              </main>
            </div>
          </section>

          <div className="flex h-[21px] shrink-0 items-stretch gap-px bg-[#f0f0f0] pt-px pl-[1257px] font-[DejaVu_Sans_Condensed,sans-serif] text-[11px]">
            <label className="relative flex items-center">
              1:
              <select className="ml-px h-5 w-[97px] appearance-none border border-[#a0a0a0] bg-white">
                <option>830.951</option>
              </select>
              <ChevronDown className="pointer-events-none absolute right-1 size-3 text-[#555]" />
            </label>
            {statusCells.map((s) => (
              <span key={s} className="mb-px flex items-center border-t-2 border-l-2 border-[#808080] whitespace-nowrap">
                {s}
              </span>
            ))}
          </div>
        </div>

        <div className="relative w-[11px] shrink-0 overflow-hidden bg-gradient-to-b from-[#8d7080] via-[#6b4048] to-[#5d3846] font-[Open_Sans,sans-serif] text-[11px] text-white">
          <span className="absolute top-[672px] right-[2px]">of</span>
          <span className="absolute top-[778px] right-[3px]">p</span>
          <span className="absolute top-[882px] right-[2px]">ix</span>
        </div>
      </div>
      <Taskbar />
    </div>
  );
}
